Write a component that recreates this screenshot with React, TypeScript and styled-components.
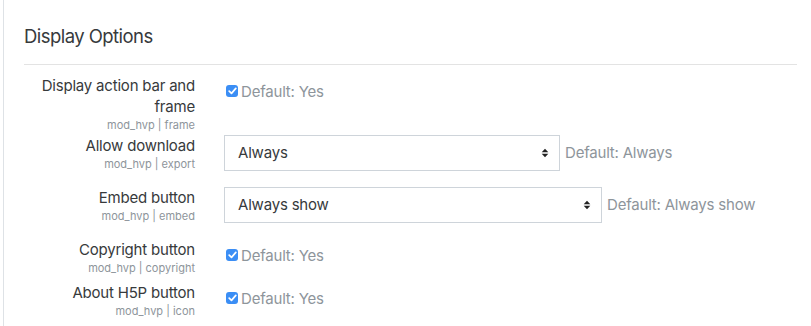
import React from "react";
import styled, { createGlobalStyle } from "styled-components";

const GlobalStyle = createGlobalStyle`
  html, body {
    margin: 0;
    padding: 0;
    background: #ffffff;
  }
  body {
    font-family: Inter, "Noto Sans", "Liberation Sans", sans-serif;
    font-size: 15px;
    color: #373a3c;
    letter-spacing: -0.2px;
  }
`;

type Kind = "checkbox" | "select";

interface Setting {
  label: string[];
  name: string;
  kind: Kind;
  value?: string;
  width?: number;
  defaultText: string;
}

const settings: Setting[] = [
  {
    label: ["Display action bar and", "frame"],
    name: "mod_hvp | frame",
    kind: "checkbox",
    defaultText: "Default: Yes",
  },
  {
    label: ["Allow download"],
    name: "mod_hvp | export",
    kind: "select",
    value: "Always",
    width: 336,
    defaultText: "Default: Always",
  },
  {
    label: ["Embed button"],
    name: "mod_hvp | embed",
    kind: "select",
    value: "Always show",
    width: 378,
    defaultText: "Default: Always show",
  },
  {
    label: ["Copyright button"],
    name: "mod_hvp | copyright",
    kind: "checkbox",
    defaultText: "Default: Yes",
  },
  {
    label: ["About H5P button"],
    name: "mod_hvp | icon",
    kind: "checkbox",
    defaultText: "Default: Yes",
  },
];

const App: React.FC = () => {
  return (
    <>
      <GlobalStyle />
      <Page>
        <Region>
          <Heading>Display Options</Heading>
          <Divider />
          {settings.map((s) => (
            <Row key={s.name}>
              <LabelCol>
                {s.label.map((line) => (
                  <LabelLine key={line}>{line}</LabelLine>
                ))}
                <SettingName>{s.name}</SettingName>
              </LabelCol>
              <ControlCol kind={s.kind}>
                {s.kind === "checkbox" ? (
                  <CheckBox>
                    <svg width="9" height="8" viewBox="0 0 9 8">
                      <path
                        d="M1.2 4.2 L3.5 6.4 L7.8 1.4"
                        fill="none"
                        stroke="#ffffff"
                        strokeWidth="1.7"
                        strokeLinecap="round"
                        strokeLinejoin="round"
                      />
                    </svg>
                  </CheckBox>
                ) : (
                  <Select style={{ width: s.width }}>
                    <span>{s.value}</span>
                    <svg width="8" height="10" viewBox="0 0 8 10">
                      <path d="M4 0.8 L7.3 4.2 L0.7 4.2 Z" fill="#222" />
                      <path d="M4 9.2 L7.3 5.8 L0.7 5.8 Z" fill="#222" />
                    </svg>
                  </Select>
                )}
                <DefaultText kind={s.kind}>{s.defaultText}</DefaultText>
              </ControlCol>
            </Row>
          ))}
        </Region>
      </Page>
    </>
  );
};

export default App;

const Page = styled.div`
  padding-left: 3px;
  height: 326px;
  overflow: hidden;
`;

const Region = styled.div`
  border-left: 1px solid #dee2e6;
  height: 100%;
  padding: 0 14px 0 20px;
`;

const Heading = styled.h3`
  margin: 0;
  padding-top: 25px;
  font-size: 18.5px;
  font-weight: 400;
  line-height: 1.2;
  letter-spacing: -0.55px;
  color: #373a3c;
`;

const Divider = styled.div`
  height: 1px;
  background: #e3e3e3;
  margin-top: 17px;
  margin-bottom: 10px;
`;

const Row = styled.div`
  display: flex;
  align-items: flex-start;
`;

const LabelCol = styled.div`
  width: 171px;
  flex: none;
  text-align: right;
  padding-right: 29px;
`;

const LabelLine = styled.div`
  font-size: 15px;
  line-height: 21px;
  color: #373a3c;
`;

const SettingName = styled.div`
  font-size: 11px;
  line-height: 17.5px;
  letter-spacing: 0;
  color: #8e959b;
`;

const ControlCol = styled.div<{ kind: Kind }>`
  display: flex;
  align-items: flex-start;
  box-sizing: border-box;
  min-height: ${(p) => (p.kind === "checkbox" ? "43px" : "52px")};
  padding-top: ${(p) => (p.kind === "checkbox" ? "6px" : "0")};
`;

const CheckBox = styled.span`
  width: 12px;
  height: 12px;
  margin: 4px 3px 0 2px;
  border-radius: 3px;
  background: #3b8ef5;
  display: inline-flex;
  align-items: center;
  justify-content: center;
  flex: none;
`;

const Select = styled.div`
  box-sizing: border-box;
  height: 36px;
  border: 1px solid #ced4da;
  display: flex;
  align-items: center;
  justify-content: space-between;
  padding: 0 10px 0 13px;
  font-size: 15px;
  color: #373a3c;
  margin-right: 5px;
  flex: none;
`;

const DefaultText = styled.span<{ kind: Kind }>`
  font-size: 15px;
  line-height: 21px;
  color: #8e959b;
  white-space: nowrap;
  margin-top: ${(p) => (p.kind === "checkbox" ? "0" : "7px")};
`;
